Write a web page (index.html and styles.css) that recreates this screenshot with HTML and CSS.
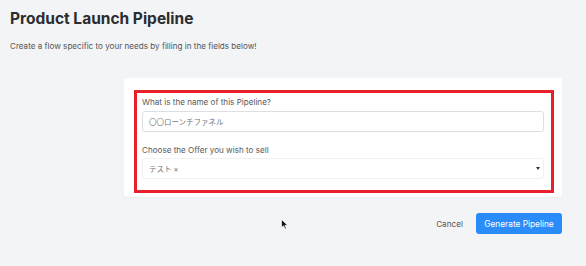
FILE: index.html
```html
<!DOCTYPE html>
<html lang="ja">
<head>
  <meta charset="UTF-8">
  <title>Product Launch Pipeline</title>
  <link rel="stylesheet" href="styles.css">
</head>
<body>

  <!-- ヘッダー -->
  <div class="page-head">
    <h1>Product Launch Pipeline</h1>
    <p>Create a flow specific to your needs by filling in the fields below!</p>
  </div>

  <!-- フォーム -->
  <div class="form-wrap">
    <div class="form-card">
      <div class="highlight">
        <label class="field-label">What is the name of this Pipeline?</label>
        <div class="text-input">〇〇ローンチファネル</div>
        <label class="field-label second">Choose the Offer you wish to sell</label>
        <div class="select-input">
          <span>テスト ×</span>
          <span class="caret"></span>
        </div>
      </div>
    </div>
    <div class="actions">
      <button class="cancel-btn">Cancel</button>
      <button class="primary-btn">Generate Pipeline</button>
    </div>
  </div>

  <!-- マウスカーソル -->
  <svg class="cursor" width="8" height="11" viewBox="0 0 8 11">
    <path d="M0.5 0.5 L0.5 8.5 L2.5 6.8 L4 10 L5.3 9.4 L3.9 6.3 L6.6 6.3 Z" fill="#111" stroke="#fff" stroke-width="0.7"/>
  </svg>

</body>
</html>
```

FILE: styles.css
```css
body {
  font-family: Inter, "Noto Sans CJK JP", sans-serif;
  background-color: #f3f4f6;
  color: #333;
  margin: 0;
  padding: 0;
  position: relative;
  height: 266px;
  overflow: hidden;
}
/* ヘッダー */
.page-head {
  padding: 9px 10px 0;
}
.page-head h1 {
  margin: 0;
  font-size: 15.5px;
  font-weight: 700;
  color: #2b2d31;
  line-height: 20px;
}
.page-head p {
  margin: 11px 0 0;
  font-size: 8.1px;
  color: #555;
  line-height: 12px;
}
/* フォーム */
.form-wrap {
  width: 438px;
  margin: 26px 24px 0 auto;
}
.form-card {
  background: #fff;
  border-radius: 3px;
  padding: 12px 8px 4px 10px;
  box-shadow: 0 1px 2px rgba(0,0,0,0.04);
}
.highlight {
  border: 3px solid #e8202a;
  padding: 3px 7px 11px 5px;
}
.field-label {
  display: block;
  font-size: 8.1px;
  color: #5a5a5a;
  line-height: 12px;
}
.field-label.second {
  margin-top: 12px;
}
.text-input,
.select-input {
  height: 21px;
  box-sizing: border-box;
  border-radius: 3px;
  display: flex;
  align-items: center;
  padding: 0 6px;
  font-size: 7.5px;
  color: #777;
  margin-top: 3px;
}
.text-input {
  border: 1px solid #dcdfe3;
}
.select-input {
  border: 1px solid #f0f1f3;
  justify-content: space-between;
  padding-right: 3px;
  margin-top: 2px;
}
.caret {
  width: 0;
  height: 0;
  border-left: 2.5px solid transparent;
  border-right: 2.5px solid transparent;
  border-top: 3px solid #333;
}
/* ボタン */
.actions {
  display: flex;
  justify-content: flex-end;
  align-items: center;
  gap: 13px;
  margin-top: 16px;
}
.cancel-btn {
  background: none;
  border: none;
  font-family: inherit;
  font-size: 8.2px;
  color: #555;
  padding: 0;
}
.primary-btn {
  font-family: inherit;
  background-color: #2a8cf8;
  color: #fff;
  border: none;
  border-radius: 3px;
  width: 86px;
  height: 21px;
  font-size: 8.3px;
  padding: 0;
}
.cursor {
  position: absolute;
  left: 281px;
  top: 219px;
}
```
